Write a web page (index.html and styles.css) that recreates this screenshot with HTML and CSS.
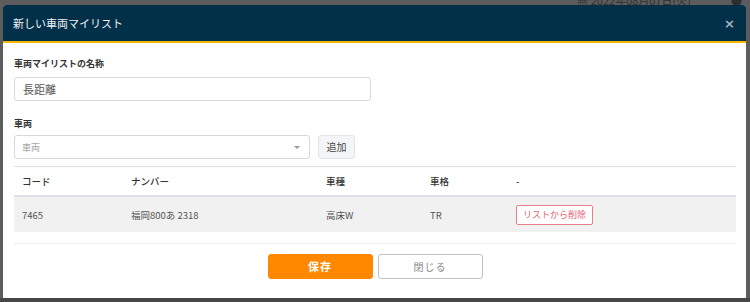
FILE: index.html
```html
<!DOCTYPE html>
<html>
<head>
<meta charset="utf-8">
<link rel="stylesheet" href="styles.css">
<title>新しい車両マイリスト</title>
</head>
<body>
<div class="behind"><span class="date">&#9638; 2022年08月07日(火)</span><span class="user">&#9679;</span></div>
<div class="modal">
  <div class="modal-head">
    <span class="modal-title">新しい車両マイリスト</span>
    <span class="modal-close">&times;</span>
  </div>
  <div class="modal-body">
    <div class="field-label">車両マイリストの名称</div>
    <div class="text-input">長距離</div>

    <div class="field-label second">車両</div>
    <div class="select-row">
      <div class="select-box"><span class="placeholder">車両</span><span class="caret"></span></div>
      <div class="btn-add">追加</div>
    </div>

    <table class="car-list">
      <tr>
        <th class="c-code">コード</th>
        <th class="c-num">ナンバー</th>
        <th class="c-type">車種</th>
        <th class="c-grade">車格</th>
        <th>-</th>
      </tr>
      <tr class="row">
        <td>7465</td>
        <td>福岡800あ 2318</td>
        <td>高床W</td>
        <td>TR</td>
        <td><span class="btn-remove">リストから削除</span></td>
      </tr>
    </table>

    <div class="modal-foot">
      <div class="btn-save">保存</div>
      <div class="btn-close">閉じる</div>
    </div>
  </div>
</div>
</body>
</html>
```

FILE: styles.css
```css
html, body {
    margin: 0;
    padding: 0;
}

body {
    width: 750px;
    height: 302px;
    overflow: hidden;
    background: linear-gradient(#5c5c5c 298px, #474747 298px);
    font-family: "Noto Sans CJK JP", "Noto Sans", sans-serif;
    color: #333;
}

.behind {
    height: 5px;
    overflow: hidden;
    display: flex;
    justify-content: flex-end;
    gap: 40px;
    padding-right: 8px;
    font-size: 11px;
    line-height: 11px;
    color: #2e2e2e;
}

.behind span {
    margin-top: -5px;
}

.modal {
    margin-left: 3px;
    width: 743px;
    height: 293px;
    background: #fff;
    border-radius: 3px 3px 0 0;
    overflow: hidden;
}

.modal-head {
    height: 36px;
    background: #033049;
    border-bottom: 2px solid #f5b800;
    display: flex;
    align-items: center;
    justify-content: space-between;
    padding: 0 10px;
}

.modal-title {
    color: #eef1f4;
    font-size: 11px;
}

.modal-close {
    color: #a6b6c3;
    font-size: 13px;
    font-weight: bold;
    font-family: "DejaVu Sans", sans-serif;
    margin-right: 1px;
}

.modal-body {
    padding: 12px 10px 0 11px;
}

.field-label {
    font-size: 9px;
    font-weight: bold;
    line-height: 18px;
    margin-bottom: 4px;
}

.field-label.second {
    margin-top: 14px;
    margin-bottom: 2px;
}

.text-input {
    box-sizing: border-box;
    width: 357px;
    height: 24px;
    border: 1px solid #d6d9dd;
    border-radius: 3px;
    padding: 0 8px;
    font-size: 11px;
    line-height: 22px;
    color: #555;
}

.select-row {
    display: flex;
    gap: 8px;
}

.select-box {
    box-sizing: border-box;
    width: 296px;
    height: 24px;
    border: 1px solid #d6d9dd;
    border-radius: 3px;
    padding: 0 7px;
    display: flex;
    align-items: center;
    justify-content: space-between;
}

.placeholder {
    font-size: 9px;
    color: #a5a5a5;
}

.caret {
    width: 0;
    height: 0;
    border-left: 3px solid transparent;
    border-right: 3px solid transparent;
    border-top: 3px solid #999;
    margin-right: 2px;
}

.btn-add {
    box-sizing: border-box;
    width: 37px;
    height: 24px;
    background: #f4f5f7;
    border: 1px solid #e2e4e8;
    border-radius: 3px;
    font-size: 10px;
    line-height: 22px;
    text-align: center;
    color: #444;
}

table.car-list {
    width: 722px;
    margin-top: 7px;
    border-collapse: collapse;
    table-layout: fixed;
    border-top: 1px solid #dde0e6;
}

table.car-list th {
    height: 28px;
    text-align: left;
    font-size: 9.5px;
    font-weight: 500;
    color: #333;
    padding: 0 0 0 8px;
    border-bottom: 2px solid #dde0e6;
}

th.c-code { width: 101px; }
th.c-num { width: 187px; }
th.c-type { width: 96px; }
th.c-grade { width: 78px; }

table.car-list tr.row td {
    height: 35px;
    background: #f1f1f1;
    font-size: 9.5px;
    color: #555;
    padding: 0 0 0 8px;
}

.btn-remove {
    display: inline-block;
    border: 1px solid #e77f8b;
    border-radius: 2px;
    padding: 0 6px;
    font-size: 9px;
    line-height: 18px;
    color: #e26373;
    background: #fff;
}

.modal-foot {
    margin-top: 11px;
    border-top: 1px solid #eeeeee;
    padding-top: 10px;
    display: flex;
    justify-content: center;
    gap: 5px;
}

.btn-save, .btn-close {
    box-sizing: border-box;
    width: 105px;
    height: 25px;
    border-radius: 3px;
    font-size: 11px;
    line-height: 23px;
    text-align: center;
    letter-spacing: 1px;
}

.btn-save {
    background: #ff8800;
    border: 1px solid #ff8800;
    color: #fff;
    font-weight: bold;
}

.btn-close {
    background: #fff;
    border: 1px solid #bfc3c8;
    color: #888;
    font-size: 10px;
}
```
